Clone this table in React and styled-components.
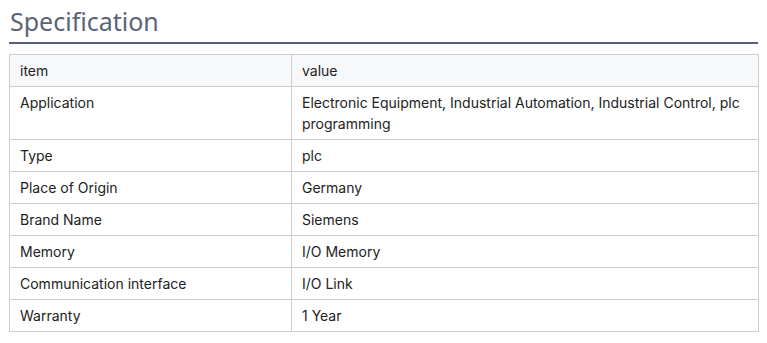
import React from "react";
import styled, { createGlobalStyle } from "styled-components";

const Global = createGlobalStyle`
  html, body { margin: 0; padding: 0; background: #fff; }
  body { font-family: Inter, "Noto Sans", sans-serif; }
`;

const Section = styled.section`
  padding: 0 9px;
`;

const Title = styled.h2`
  margin: 0;
  padding: 4px 0 0 1px;
  height: 44px;
  box-sizing: border-box;
  font-family: "Noto Sans", "Open Sans", sans-serif;
  font-weight: 400;
  font-size: 25px;
  line-height: 34px;
  color: #5a6477;
  border-bottom: 2px solid #546075;
  width: 749px;
`;

const Table = styled.table`
  margin-top: 10px;
  width: 750px;
  border-collapse: collapse;
  table-layout: fixed;
  font-family: Inter, "Noto Sans", sans-serif;
  font-size: 14px;
  line-height: 21px;
  color: #222;
`;

const Cell = styled.td`
  border: 1px solid #cccccc;
  padding: 5px 10px;
  vertical-align: top;
  text-align: left;
  background: ${(p) => (p.$head ? "#f7f8fa" : "#fff")};
  width: ${(p) => (p.$first ? "261px" : "auto")};
`;

const rows = [
  ["Application", "Electronic Equipment, Industrial Automation, Industrial Control, plc programming"],
  ["Type", "plc"],
  ["Place of Origin", "Germany"],
  ["Brand Name", "Siemens"],
  ["Memory", "I/O Memory"],
  ["Communication interface", "I/O Link"],
  ["Warranty", "1 Year"],
];

export default function App() {
  return (
    <>
      <Global />
      <Section>
        <Title>Specification</Title>
        <Table>
          <tbody>
            <tr>
              <Cell $head $first>item</Cell>
              <Cell $head>value</Cell>
            </tr>
            {rows.map(([k, v]) => (
              <tr key={k}>
                <Cell $first>{k}</Cell>
                <Cell>{v}</Cell>
              </tr>
            ))}
          </tbody>
        </Table>
      </Section>
    </>
  );
}
